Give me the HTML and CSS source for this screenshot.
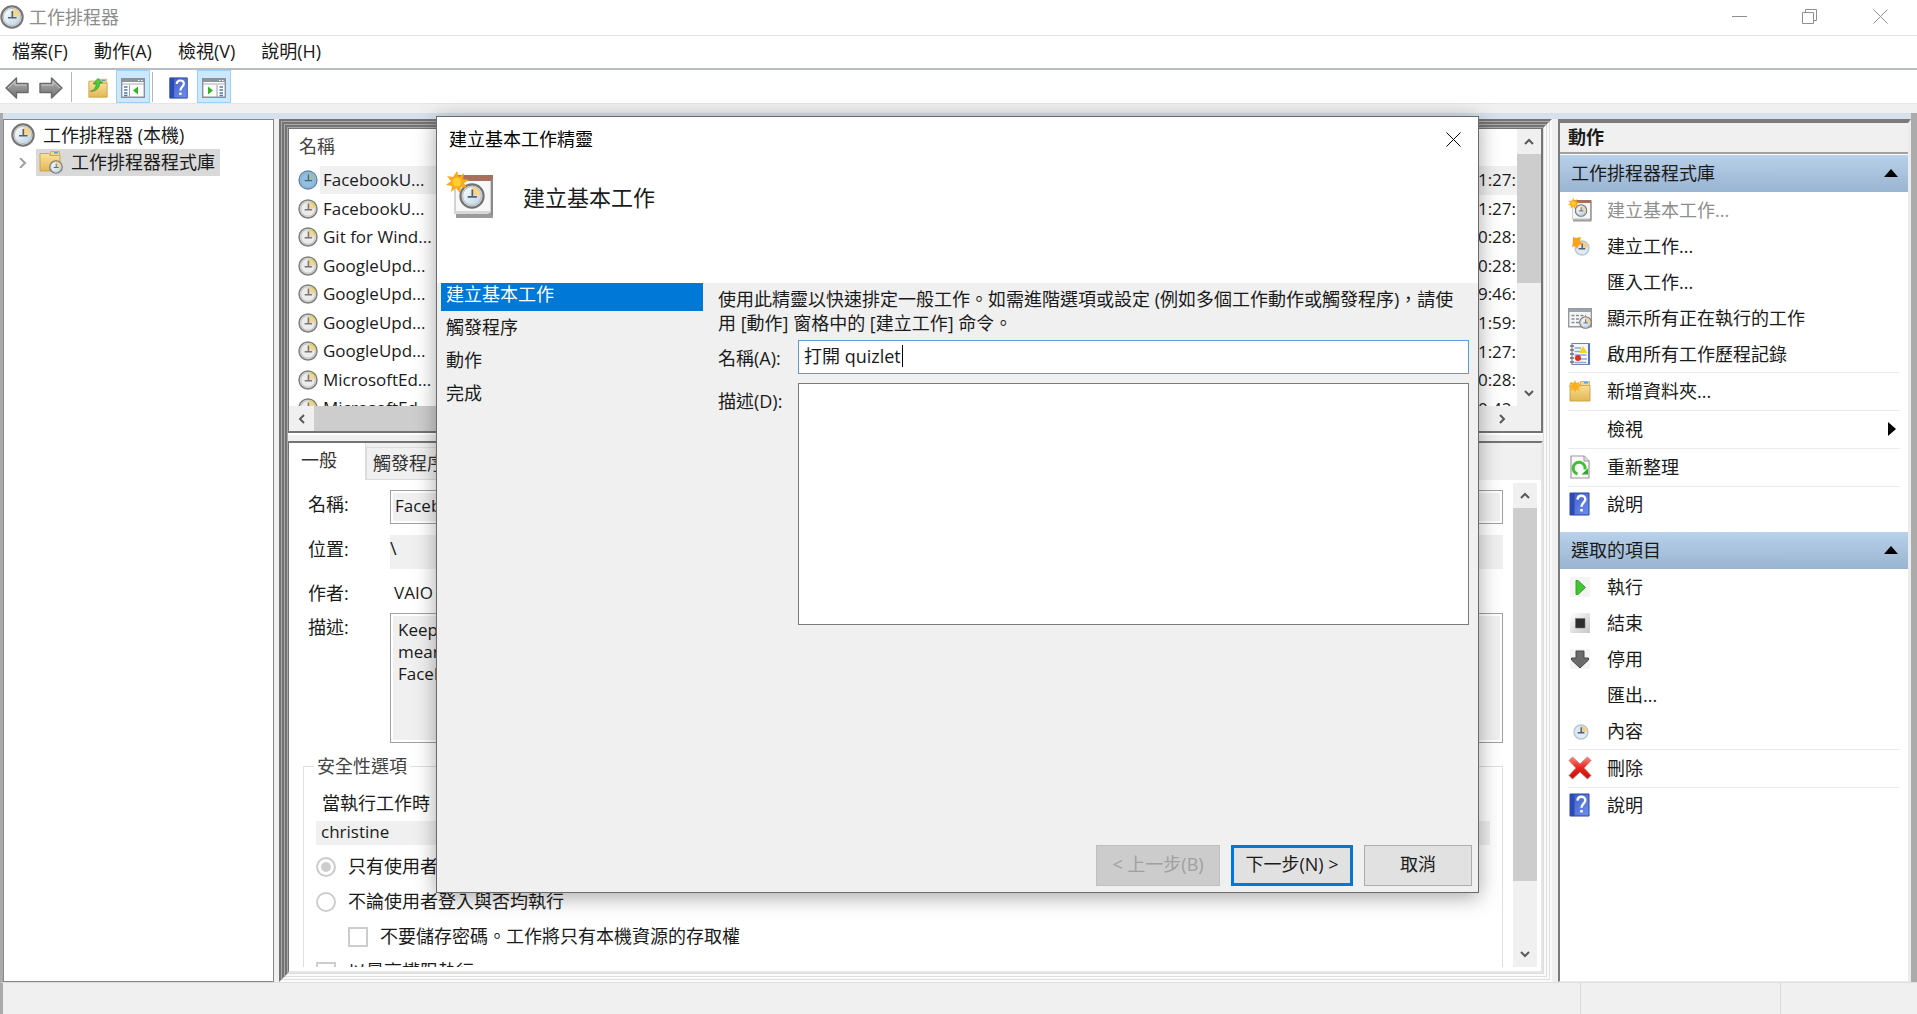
FILE: index.html
```html
<!DOCTYPE html>
<html lang="zh-TW">
<head>
    <meta charset="UTF-8">
    <meta name="viewport" content="width=device-width, initial-scale=1.0">
    <title>工作排程器</title>
    <link rel="stylesheet" href="styles.css">
</head>
<body>

    <!-- 共用圖示 -->
    <svg class="sprite" aria-hidden="true">
        <defs>
            <linearGradient id="g-face" x1="0" y1="0" x2="1" y2="1"><stop offset="0" stop-color="#fff"/><stop offset="1" stop-color="#bcd3e4"/></linearGradient>
            <linearGradient id="g-folder" x1="0" y1="0" x2="0" y2="1"><stop offset="0" stop-color="#fbe3a0"/><stop offset="1" stop-color="#e3b653"/></linearGradient>
            <linearGradient id="g-book" x1="0" y1="0" x2="1" y2="1"><stop offset="0" stop-color="#3c5cc8"/><stop offset="1" stop-color="#6f8fee"/></linearGradient>
            <linearGradient id="g-arrow" x1="0" y1="0" x2="0" y2="1"><stop offset="0" stop-color="#b5b5b5"/><stop offset="1" stop-color="#6f6f6f"/></linearGradient>
            <linearGradient id="g-red" x1="0" y1="0" x2="0" y2="1"><stop offset="0" stop-color="#f58a80"/><stop offset=".5" stop-color="#e8231c"/><stop offset="1" stop-color="#c4120e"/></linearGradient>
            <linearGradient id="g-stop" x1="0" y1="0" x2="1" y2="1"><stop offset="0" stop-color="#fff"/><stop offset="1" stop-color="#c6c6c6"/></linearGradient>
        </defs>
        <symbol id="clock" viewBox="0 0 24 24">
            <circle cx="12" cy="12" r="10.7" fill="#dcdcdc" stroke="#747474" stroke-width="2"/>
            <circle cx="12" cy="12" r="8.6" fill="url(#g-face)" stroke="#a9b4bc" stroke-width=".8"/>
            <path d="M12.5 11.5V3.8a8 8 0 0 1 7.7 7.7z" fill="#f8d48c"/>
            <path d="M12.3 6v6.8M8 12.8h8.5" stroke="#4e6078" stroke-width="1.6" fill="none"/>
        </symbol>
        <symbol id="clock-list" viewBox="0 0 24 24">
            <circle cx="12" cy="12" r="10.8" fill="#e2e2e2" stroke="#808080" stroke-width="1.8"/>
            <circle cx="12" cy="12" r="8.6" fill="#ececea" stroke="#b2b2b2" stroke-width=".8"/>
            <path d="M12.5 11.5V3.8a8 8 0 0 1 7.7 7.7z" fill="#f6d2a0"/>
            <path d="M14 3.2a9 9 0 0 1 6.6 6.8" stroke="#d2d860" stroke-width="1.8" fill="none"/>
            <path d="M12.5 5.5v7.3M8 12.8h9" stroke="#77777b" stroke-width="1.8" fill="none"/>
        </symbol>
        <symbol id="clock-blue" viewBox="0 0 24 24">
            <circle cx="12" cy="12" r="10.8" fill="#9dc3df" stroke="#5d88a8" stroke-width="1.6"/>
            <circle cx="12" cy="12" r="8.6" fill="#94bfe0" stroke="#7ba6c6" stroke-width=".8"/>
            <path d="M12.5 11.5V3.8a8 8 0 0 1 7.7 7.7z" fill="#9fbfa6"/>
            <path d="M12.5 5.5v7.3M8 12.8h9" stroke="#3d6588" stroke-width="1.6" fill="none"/>
        </symbol>
        <symbol id="folder" viewBox="0 0 24 24">
            <path d="M2 4.5h9l1 2h10V22H2z" fill="url(#g-folder)" stroke="#c9a04a" stroke-width=".9"/>
            <path d="M12.5 2.5h9v4h-9z" fill="#f2d98c" stroke="#c9a04a" stroke-width=".7"/>
            <path d="M16 3.8h4" stroke="#4b9bdc" stroke-width="1.4"/>
        </symbol>
        <symbol id="folder-up" viewBox="0 0 24 24">
            <use href="#folder"/>
            <path d="M4 15.5c4-1 6-4 6-8H6.5L12 1.5l5 5h-3.2c0 5-3.8 9.5-9.8 9z" fill="#4fcb3a" stroke="#2b9422" stroke-width=".8"/>
        </symbol>
        <symbol id="folder-clock" viewBox="0 0 24 24">
            <use href="#folder" x="-1" y="-1"/>
            <svg x="10" y="10" width="14" height="14"><use href="#clock"/></svg>
        </symbol>
        <symbol id="folder-new" viewBox="0 0 24 24">
            <use href="#folder"/>
            <path d="M7 1l1.4 3 3.2-1.3-1.3 3.2 3 1.4-3 1.4 1.3 3.2-3.2-1.3L7 13.6 5.6 10.6 2.4 11.9l1.3-3.2-3-1.4 3-1.4L2.4 2.7 5.6 4z" fill="#fcae1b"/>
        </symbol>
        <symbol id="help" viewBox="0 0 24 24">
            <path d="M2 1h19v22H2z" fill="url(#g-book)" stroke="#2a459c"/>
            <path d="M2 1h4.500v22H2z" fill="#2b4bb5"/>
            <path d="M9.500 7.600c.2-5 7.800-5 7.800-.4 0 3.500-3.800 3.300-3.800 7.600" fill="none" stroke="#fff" stroke-width="2.400"/>
            <path d="M12.200 17h2.600v2.600h-2.600z" fill="#fff"/>
        </symbol>
        <symbol id="pane-left" viewBox="0 0 24 20">
            <path d="M.7.700h22.600v18.600H.7z" fill="#fdfdfd" stroke="#8a9097" stroke-width="1.400"/>
            <path d="M1 1h22v3H1z" fill="#8b939b"/><path d="M1 6h22" stroke="#a7aeb5"/>
            <path d="M17 2.500h1.500M20 2.500h1.500" stroke="#fff"/>
            <path d="M8.500 7v12" stroke="#9aa0a6"/>
            <path d="M3 9h3.500M3 12h3.500M3 15h3.500M3 17.500h3.500" stroke="#4c7cb0" stroke-width="1.300"/>
            <path d="M17 8.500v8L12 12.500z" fill="#35b324"/>
        </symbol>
        <symbol id="pane-right" viewBox="0 0 24 20">
            <path d="M.7.700h22.600v18.600H.7z" fill="#fdfdfd" stroke="#8a9097" stroke-width="1.400"/>
            <path d="M1 1h22v3H1z" fill="#8b939b"/><path d="M1 6h22" stroke="#a7aeb5"/>
            <path d="M17 2.500h1.500M20 2.500h1.500" stroke="#fff"/>
            <path d="M15 7v12" stroke="#9aa0a6"/>
            <path d="M17.500 9H21M17.500 12H21M17.500 15H21M17.500 17.500H21" stroke="#4c7cb0" stroke-width="1.300"/>
            <path d="M6 8.500v8l5-4z" fill="#35b324"/>
        </symbol>
        <symbol id="back" viewBox="0 0 24 22">
            <path d="M1 11L11.500 1v5.500H23v9H11.500V21z" fill="url(#g-arrow)" stroke="#6a6a6a" stroke-width="1.400" stroke-linejoin="round"/>
            <path d="M3 11l7-6.500V8h11.500" fill="none" stroke="#d0d0d0" stroke-width=".9"/>
        </symbol>
        <symbol id="forward" viewBox="0 0 24 22">
            <path d="M23 11L12.500 1v5.500H1v9h11.500V21z" fill="url(#g-arrow)" stroke="#6a6a6a" stroke-width="1.400" stroke-linejoin="round"/>
            <path d="M21 11l-7-6.500V8H2.500" fill="none" stroke="#d0d0d0" stroke-width=".9"/>
        </symbol>
        <symbol id="basic-task" viewBox="0 0 48 48">
            <path d="M10 10h37v37H10z" fill="#9b9b9b"/>
            <path d="M9 5h36v37H9z" fill="#f7f7f7" stroke="#a9a9a9"/>
            <path d="M9 4h38v6H9z" fill="#a86f5c"/><path d="M45 8h2v36h-2z" fill="#8b8b8b"/>
            <path d="M10 40l-3 3h35l3-3z" fill="#d8d8d8"/>
            <svg x="13" y="12" width="26" height="26"><use href="#clock"/></svg>
            <path d="M11 0l2 6 5-4-1 6 6 1-5 3 3 5-6-1-1 6-4-5-5 4 1-6-6-1 5-4-4-5 6 1z" fill="#fba81a"/>
            <circle cx="11" cy="11" r="4.500" fill="#ffcd2e"/>
        </symbol>
        <symbol id="new-task" viewBox="0 0 24 24">
            <svg x="6" y="6" width="16" height="16"><use href="#clock-soft"/></svg>
            <path d="M5 3l3 1 5-1-1 4 3 3-4 1-2 4-2-3-3 1 1-5z" fill="#fba21a"/>
        </symbol>
        <symbol id="clock-soft" viewBox="0 0 24 24">
            <circle cx="12" cy="12" r="10.5" fill="#dfeaf2" stroke="#b3c6d3" stroke-width="2"/>
            <path d="M12.500 11.500V3a9 9 0 0 1 8.500 8.500z" fill="#f5cf7c"/>
            <path d="M12.300 5v8.500M7 13h10" stroke="#4e6078" stroke-width="2.200" fill="none"/>
        </symbol>
        <symbol id="small-clock" viewBox="0 0 24 24">
            <svg x="5" y="5" width="16" height="16"><use href="#clock-soft"/></svg>
        </symbol>
        <symbol id="running" viewBox="0 0 24 24">
            <path d="M.7 2.700h22.600v18H.7z" fill="#f6f6f6" stroke="#9299a0" stroke-width="1.400"/>
            <path d="M1 3h22v3H1z" fill="#9aa2aa"/>
            <path d="M3.500 9.500H18M3.500 13H12M3.500 16.500H11" stroke="#868d93" stroke-dasharray="3 1.500" stroke-width="1.300"/>
            <svg x="11" y="10" width="13" height="13"><use href="#clock"/></svg>
        </symbol>
        <symbol id="history" viewBox="0 0 24 24">
            <path d="M4 1.500h17.500v21H4z" fill="#f4f8fd" stroke="#7683a8" stroke-width="1.200"/>
            <path d="M20 2h1.800v20H20z" fill="#5271c4"/>
            <path d="M6.500 6H13M6.500 9.500h6M6.500 13h12M12 17h7M6.500 20.500h12" stroke="#8dabd0" stroke-width="1.300"/>
            <path d="M2 4h4M2 8h4M2 12h4M2 16h4M2 20h4" stroke="#6d6d6d" stroke-width="1.300"/>
            <path d="M15 4l4.500 7h-8.500z" fill="#f7d21e"/><circle cx="10" cy="16" r="3" fill="#d8322a"/>
        </symbol>
        <symbol id="refresh" viewBox="0 0 24 24">
            <path d="M3 1h13l5 5v17H3z" fill="#fafafa" stroke="#9a9a9a" stroke-width="1.200"/>
            <path d="M16 1v5h5" fill="#e2e2e2" stroke="#9a9a9a"/>
            <path d="M9.500 19A6 6 0 1 1 17 14.500" fill="none" stroke="#3fbe36" stroke-width="3"/>
            <path d="M20 13.500v6h-6.500z" fill="#2fa628"/>
        </symbol>
        <symbol id="run" viewBox="0 0 24 24">
            <path d="M2 2h20v20H2z" fill="#f4f4f4"/>
            <path d="M8 5.500l2 0 7.500 7-7.500 7H8z" fill="#43c435" stroke="#2c9a22" stroke-width=".9"/>
        </symbol>
        <symbol id="stop" viewBox="0 0 24 24">
            <path d="M2 2h20v20H2z" fill="url(#g-stop)"/>
            <path d="M7.500 7.500h9.500V17H7.500z" fill="#2e2e2e" stroke="#6c6c6c" stroke-width=".6"/>
        </symbol>
        <symbol id="disable" viewBox="0 0 24 24">
            <path d="M2 2h20v20H2z" fill="#f4f4f4"/>
            <path d="M8 4h8v7h4.500v2L12 21l-8.500-8v-2H8z" fill="#6a6a6a" stroke="#444" stroke-linejoin="round"/>
        </symbol>
        <symbol id="delete" viewBox="0 0 24 24">
            <path d="M4.500 1L12 8l7.500-7L23 4.500 16 12l7 7.500-3.500 3.500L12 16l-7.500 7L1 19.500 8 12 1 4.500z" fill="url(#g-red)" stroke="#d56a64" stroke-width=".8" stroke-linejoin="round"/>
        </symbol>
        <symbol id="chev-up" viewBox="0 0 10 10"><path d="M1 7l4-4 4 4" fill="none" stroke="#5a5a5a" stroke-width="2"/></symbol>
        <symbol id="chev-down" viewBox="0 0 10 10"><path d="M1 3l4 4 4-4" fill="none" stroke="#5a5a5a" stroke-width="2"/></symbol>
        <symbol id="chev-left" viewBox="0 0 10 10"><path d="M7 1L3 5l4 4" fill="none" stroke="#5a5a5a" stroke-width="2"/></symbol>
        <symbol id="chev-right" viewBox="0 0 10 10"><path d="M3 1l4 4-4 4" fill="none" stroke="#5a5a5a" stroke-width="2"/></symbol>
        <symbol id="close" viewBox="0 0 15 15"><path d="M.5.500l14 14M14.500.500l-14 14" fill="none" stroke="currentColor"/></symbol>
    </svg>

    <div class="window">
        <header class="titlebar">
            <svg class="icon"><use href="#clock"/></svg>
            <h1 class="title">工作排程器</h1>
            <div class="controls">
                <button aria-label="最小化"><svg viewBox="0 0 15 15"><path d="M0 7.500h15" stroke="currentColor"/></svg></button>
                <button aria-label="還原"><svg viewBox="0 0 15 15"><path d="M.5 3.500h11v11H.5zM3.500 3.500v-3h11v11h-3" fill="none" stroke="currentColor"/></svg></button>
                <button aria-label="關閉"><svg><use href="#close"/></svg></button>
            </div>
        </header>

        <nav class="menubar">
            <button>檔案(F)</button>
            <button>動作(A)</button>
            <button>檢視(V)</button>
            <button>說明(H)</button>
        </nav>

        <div class="toolbar">
            <button aria-label="上一頁"><svg><use href="#back"/></svg></button>
            <button aria-label="下一頁"><svg><use href="#forward"/></svg></button>
            <span class="divider"></span>
            <button class="spaced" aria-label="上一層"><svg><use href="#folder-up"/></svg></button>
            <button class="on" aria-label="顯示主控台樹狀目錄"><svg><use href="#pane-left"/></svg></button>
            <span class="divider tight"></span>
            <button class="spaced" aria-label="說明"><svg><use href="#help"/></svg></button>
            <button class="on" aria-label="顯示動作窗格"><svg><use href="#pane-right"/></svg></button>
        </div>

        <main class="workspace">
            <aside class="tree">
                <div class="tree-root"><svg class="icon"><use href="#clock"/></svg>工作排程器 (本機)</div>
                <div class="tree-child">
                    <svg class="twisty" viewBox="0 0 10 10"><path d="M3 0l5 5-5 5" fill="none" stroke="#a0a0a0" stroke-width="2"/></svg>
                    <span class="tree-selected"><svg class="icon"><use href="#folder-clock"/></svg>工作排程器程式庫</span>
                </div>
            </aside>

            <section class="center">
                <div class="bevel"><div class="bevel"><div class="bevel">
                    <div class="list-pane">
                        <div class="list-row">
                            <div class="list-view">
                                <table class="tasks">
                                    <thead><tr><th class="name">名稱</th><th></th></tr></thead>
                                    <tbody>
                                        <tr class="selected"><td class="name"><svg class="row-icon"><use href="#clock-blue"/></svg><span>FacebookU...</span></td><td>1:27:</td></tr>
                                        <tr><td class="name"><svg class="row-icon"><use href="#clock-list"/></svg><span>FacebookU...</span></td><td>1:27:</td></tr>
                                        <tr><td class="name"><svg class="row-icon"><use href="#clock-list"/></svg><span>Git for Wind...</span></td><td>0:28:</td></tr>
                                        <tr><td class="name"><svg class="row-icon"><use href="#clock-list"/></svg><span>GoogleUpd...</span></td><td>0:28:</td></tr>
                                        <tr><td class="name"><svg class="row-icon"><use href="#clock-list"/></svg><span>GoogleUpd...</span></td><td>9:46:</td></tr>
                                        <tr><td class="name"><svg class="row-icon"><use href="#clock-list"/></svg><span>GoogleUpd...</span></td><td>1:59:</td></tr>
                                        <tr><td class="name"><svg class="row-icon"><use href="#clock-list"/></svg><span>GoogleUpd...</span></td><td>1:27:</td></tr>
                                        <tr><td class="name"><svg class="row-icon"><use href="#clock-list"/></svg><span>MicrosoftEd...</span></td><td>0:28:</td></tr>
                                        <tr><td class="name"><svg class="row-icon"><use href="#clock-list"/></svg><span>MicrosoftEd...</span></td><td>0:42:</td></tr>
                                    </tbody>
                                </table>
                            </div>
                            <div class="vscroll">
                                <button aria-label="向上捲動"><svg><use href="#chev-up"/></svg></button>
                                <div class="thumb list-thumb"></div>
                                <button aria-label="向下捲動"><svg><use href="#chev-down"/></svg></button>
                            </div>
                        </div>
                        <div class="hscroll">
                            <button aria-label="向左捲動"><svg><use href="#chev-left"/></svg></button>
                            <div class="hthumb"></div>
                            <button aria-label="向右捲動"><svg><use href="#chev-right"/></svg></button>
                        </div>
                    </div>

                    <div class="detail-pane">
                        <div class="tabs">
                            <button class="tab active">一般</button>
                            <button class="tab">觸發程序</button>
                        </div>
                        <div class="tab-body">
                            <form class="general">
                                <div class="field">
                                    <label for="t-name">名稱:</label>
                                    <input id="t-name" class="boxed" value="FacebookUpdateTask" readonly>
                                </div>
                                <div class="field">
                                    <label for="t-path">位置:</label>
                                    <input id="t-path" class="flat" value="\" readonly>
                                </div>
                                <div class="field author">
                                    <label>作者:</label>
                                    <span>VAIO</span>
                                </div>
                                <div class="field tall">
                                    <label for="t-desc">描述:</label>
                                    <textarea id="t-desc" class="boxed" readonly>Keep
mean
Facebook</textarea>
                                </div>
                                <fieldset class="security">
                                    <legend>安全性選項</legend>
                                    <p>當執行工作時</p>
                                    <div class="account">christine</div>
                                    <label class="choice"><input type="radio" name="logon" checked disabled>只有使用者登入時才執行</label>
                                    <label class="choice"><input type="radio" name="logon" disabled>不論使用者登入與否均執行</label>
                                    <label class="choice sub"><input type="checkbox" disabled>不要儲存密碼。工作將只有本機資源的存取權</label>
                                    <label class="choice"><input type="checkbox" disabled>以最高權限執行</label>
                                </fieldset>
                            </form>
                            <div class="vscroll">
                                <button aria-label="向上捲動"><svg><use href="#chev-up"/></svg></button>
                                <div class="thumb detail-thumb"></div>
                                <button aria-label="向下捲動"><svg><use href="#chev-down"/></svg></button>
                            </div>
                        </div>
                    </div>
                </div></div></div>
            </section>

            <aside class="actions">
                <h2>動作</h2>
                <section class="group">
                    <button class="group-title">工作排程器程式庫<span class="tri-up"></span></button>
                    <button class="action" disabled><svg><use href="#basic-task"/></svg>建立基本工作...</button>
                    <button class="action"><svg><use href="#new-task"/></svg>建立工作...</button>
                    <button class="action"><svg></svg>匯入工作...</button>
                    <button class="action"><svg><use href="#running"/></svg>顯示所有正在執行的工作</button>
                    <button class="action"><svg><use href="#history"/></svg>啟用所有工作歷程記錄</button>
                    <hr>
                    <button class="action"><svg><use href="#folder-new"/></svg>新增資料夾...</button>
                    <hr>
                    <button class="action"><svg></svg>檢視<span class="tri-right"></span></button>
                    <hr>
                    <button class="action"><svg><use href="#refresh"/></svg>重新整理</button>
                    <hr>
                    <button class="action"><svg><use href="#help"/></svg>說明</button>
                </section>
                <section class="group">
                    <button class="group-title">選取的項目<span class="tri-up"></span></button>
                    <button class="action"><svg><use href="#run"/></svg>執行</button>
                    <button class="action"><svg><use href="#stop"/></svg>結束</button>
                    <button class="action"><svg><use href="#disable"/></svg>停用</button>
                    <button class="action"><svg></svg>匯出...</button>
                    <button class="action"><svg><use href="#small-clock"/></svg>內容</button>
                    <hr>
                    <button class="action"><svg><use href="#delete"/></svg>刪除</button>
                    <hr>
                    <button class="action"><svg><use href="#help"/></svg>說明</button>
                </section>
            </aside>
        </main>

        <footer class="statusbar"><span class="grow"></span><span class="cell wide"></span><span class="cell"></span></footer>
    </div>

    <!-- 建立基本工作精靈 -->
    <div class="wizard" role="dialog" aria-labelledby="wizard-title">
        <div class="wizard-head">
            <div class="wizard-bar">
                <span id="wizard-title">建立基本工作精靈</span>
                <button aria-label="關閉"><svg><use href="#close"/></svg></button>
            </div>
            <div class="wizard-banner">
                <svg><use href="#basic-task"/></svg>
                <h2>建立基本工作</h2>
            </div>
        </div>
        <div class="wizard-body">
            <ol class="steps">
                <li class="current">建立基本工作</li>
                <li>觸發程序</li>
                <li>動作</li>
                <li>完成</li>
            </ol>
            <form class="page">
                <p>使用此精靈以快速排定一般工作。如需進階選項或設定 (例如多個工作動作或觸發程序)，請使用 [動作] 窗格中的 [建立工作] 命令。</p>
                <div class="row">
                    <label for="w-name">名稱(A):</label>
                    <div class="name-box">
                        <input id="w-name" value="打開 quizlet">
                        <span class="caret"></span>
                    </div>
                </div>
                <div class="row">
                    <label for="w-desc">描述(D):</label>
                    <textarea id="w-desc"></textarea>
                </div>
            </form>
        </div>
        <div class="wizard-buttons">
            <button class="prev" disabled>&lt; 上一步(B)</button>
            <button class="next">下一步(N) &gt;</button>
            <button class="cancel">取消</button>
        </div>
    </div>

</body>
</html>
```
FILE: styles.css
```css
* { box-sizing: border-box; }

body {
    margin: 0;
    font: 18px/24px 'Open Sans', 'Noto Sans CJK TC', sans-serif;
    color: #1a1a1a;
    background: #f0f0f0;
    overflow: hidden;
}

button, input, textarea {
    font: inherit;
    color: inherit;
    border: 0;
    margin: 0;
    padding: 0;
    background: none;
}

h1, h2, p, ol { margin: 0; padding: 0; font-weight: normal; }
svg { display: block; flex: none; }
.sprite { position: absolute; width: 0; height: 0; }
.icon { width: 24px; height: 24px; }

.window {
    display: flex;
    flex-direction: column;
    height: 100vh;
}

/* 標題列、功能表、工具列 */
.titlebar {
    display: flex;
    align-items: center;
    height: 36px;
    padding-bottom: 2px;
    background: #fff;
    border-bottom: 1px solid #e3e3e3;
}
.title { margin-left: 5px; font-size: 18px; line-height: 24px; color: #8c8c8c; }
.controls { display: flex; margin-left: auto; color: #8f8f8f; }
.controls button { width: 70px; height: 33px; }
.controls svg { width: 15px; height: 15px; margin: auto; }
.controls button:last-child { width: 73px; }

.menubar {
    display: flex;
    height: 34px;
    padding-right: 12px;
    background: #fff;
    border-bottom: 2px solid #b9bcc0;
}
.menubar button { padding: 0 14px 2px 12px; }

.toolbar {
    display: flex;
    align-items: center;
    height: 34px;
    background: #fff;
    border-bottom: 1px solid #e6e6e6;
}
.toolbar button { width: 34px; height: 33px; padding-top: 2px; }
.toolbar svg { width: 24px; height: 22px; margin: auto; }
.toolbar .spaced { margin-left: 9px; }
.toolbar .on { background: #cce8ff; border: 1px solid #99d1ff; margin-left: 1px; }
.divider { width: 1px; height: 30px; background: #b5b5b5; margin-left: 3px; }
.divider.tight { margin-left: 2px; }

/* 主要區域 */
.workspace {
    display: flex;
    flex: 1;
    min-height: 0;
    margin-top: 9px;
    border: solid #ababab;
    border-width: 0 6px 0 3px;
    box-shadow: inset 0 6px #d5e2ee;
    padding-top: 6px;
}

.tree {
    width: 271px;
    background: #fff;
    border: 1px solid #828790;
    padding: 3px 0 0 7px;
}
.tree-root { display: flex; gap: 8px; height: 26px; }
.tree-child { display: flex; align-items: center; }
.twisty { width: 10px; height: 10px; margin: 0 9px 0 6px; }
.tree-selected {
    display: flex;
    gap: 8px;
    padding: 1px 5px 2px 3px;
    background: #d9d9d9;
}

.center { flex: 1; min-width: 0; margin: 0 6px 0 5px; }
.bevel {
    display: flex;
    flex-direction: column;
    height: 100%;
    padding: 1px;
    border: 2px solid;
    border-color: #747474 #fbfbfb #fbfbfb #747474;
    box-shadow: inset 1px 1px #a8a8a8, inset -1px -1px #dedede;
    background: #f0f0f0;
}

.list-pane {
    height: 305px;
    border: 2px solid #747474;
    border-width: 1px 2px 2px 1px;
    background: #fff;
    box-shadow: 0 2px #fff;
}
.list-row { display: flex; height: 277px; }
.list-view { flex: 1; overflow: hidden; }
.tasks {
    width: 100%;
    height: 294px;
    border-collapse: collapse;
    font-size: 17px;
}
.tasks th {
    height: 37px;
    padding: 0 0 4px 10px;
    font-size: 18px;
    font-weight: normal;
    text-align: left;
    color: #444;
}
.tasks td { padding: 0 1px 0 0; text-align: right; }
.tasks td.name { display: flex; padding-left: 9px; height: 28px; align-items: center; }
.row-icon { width: 20px; height: 20px; margin-right: 2px; }
.name span { flex: 1; padding-left: 3px; text-align: left; line-height: 28px; }
.selected td:last-child, .selected .name span { background: #f0f0f0; }

.vscroll {
    display: flex;
    flex-direction: column;
    width: 24px;
    background: #f0f0f0;
}
.vscroll button, .hscroll button { width: 24px; height: 25px; }
.vscroll svg, .hscroll svg { width: 10px; height: 10px; margin: auto; }
.vscroll button:last-child { margin-top: auto; padding-bottom: 2px; }
.thumb { background: #cdcdcd; }
.list-thumb { height: 129px; }
.detail-thumb { flex: 0 0 77%; }
.hscroll {
    display: flex;
    padding: 0 27px 0 1px;
    background: #f0f0f0;
}
.hthumb { width: 88%; margin-right: auto; background: #cdcdcd; }

/* 詳細資料 */
.detail-pane {
    display: flex;
    flex-direction: column;
    flex: 1;
    min-height: 0;
    margin-top: 8px;
    border: 2px solid;
    border-color: #747474 #e5e5e5 #e5e5e5 #747474;
    border-left-width: 1px;
    background: #fff;
}
.tabs {
    display: flex;
    align-items: flex-end;
    height: 37px;
    background: #f0f0f0;
}
.tab {
    height: 33px;
    padding: 0 6px 2px;
    border: 1px solid #dcdcdc;
    text-align: left;
    color: #333;
}
.tab.active {
    width: 77px;
    height: 37px;
    padding: 0 0 3px 12px;
    border-width: 0 1px 0 0;
    background: #fff;
}
.tab-body {
    display: flex;
    flex: 1;
    min-height: 0;
    padding: 3px 4px 4px 14px;
}
.general {
    flex: 1;
    min-width: 0;
    overflow: hidden;
    margin-right: 10px;
    padding-top: 7px;
}
.field { display: flex; height: 34px; margin-bottom: 11px; }
.field label { width: 87px; padding: 2px 0 0 5px; }
.field input, .field textarea { flex: 1; resize: none; }
.field .boxed {
    padding: 0 3px 2px 4px;
    border: 1px solid #a0a0a0;
    box-shadow: inset 0 0 0 2px #fff;
    background: #f0f0f0;
    font-size: 17px;
    outline: 0;
}
.field .flat { background: #f0f0f0; padding-bottom: 8px; }
.author { height: 22px; font-size: 17px; line-height: 22px; }
.author label { font-size: 18px; }
.author span { padding: 2px 4px; }
.tall { height: 130px; }
.field textarea.boxed { padding: 5px 7px; line-height: 22px; }

.security {
    min-width: 0;
    margin: 0;
    padding: 14px 12px 40px;
    border: 1px solid #dfdfdf;
}
.security legend { padding: 0 3px; margin-left: -2px; color: #444; }
.security p { padding-left: 6px; margin-top: -1px; }
.account {
    height: 24px;
    margin: 6px 0 9px;
    padding-left: 5px;
    background: #f0f0f0;
    font-size: 17px;
    line-height: 22px;
}
.choice { display: flex; gap: 12px; margin-bottom: 11px; }
.choice.sub { margin-left: 32px; }
.choice input {
    appearance: none;
    flex: none;
    width: 20px;
    height: 20px;
    margin-top: 3px;
    border: 2px solid #cdcdcd;
    background: #fff;
}
.choice input[type=radio] { border-radius: 50%; }
.choice input:checked { background: #cdcdcd; box-shadow: inset 0 0 0 3px #fff; }

/* 動作窗格 */
.actions {
    width: 353px;
    border: solid;
    border-width: 4px 3px 1px 2px;
    border-color: #7b7b7b #ececec #ececec #7b7b7b;
    background: #fff;
}
.actions h2 {
    height: 31px;
    padding: 2px 8px;
    border-bottom: 2px solid #a0a0a0;
    background: #f0f0f0;
    font-size: 18px;
    font-weight: bold;
    line-height: 24px;
}
.group { margin-bottom: 8px; }
.group-title {
    display: flex;
    align-items: center;
    justify-content: space-between;
    width: 100%;
    height: 38px;
    padding: 0 10px 2px 11px;
    border-top: 1px solid #fff;
    background: linear-gradient(#b9d1ea, #99b4d1);
}
.tri-up { border: 7px solid transparent; border-top: 0; border-bottom: 8px solid #000; }
.action {
    display: flex;
    align-items: center;
    gap: 15px;
    width: 100%;
    height: 36px;
    padding: 0 12px 1px 8px;
}
.action svg { width: 24px; height: 24px; }
.action:disabled { color: #8e8e8e; }
.tri-right { margin-left: auto; border: 7px solid transparent; border-left: 8px solid #000; border-right: 0; }
.group hr { height: 1px; margin: 0 8px; border: 0; background: #ebebeb; }
.group hr + .action { height: 37px; padding-bottom: 2px; }
.group hr + .action:last-child { height: 36px; }

.statusbar {
    display: flex;
    height: 32px;
    border-top: 1px solid #dedede;
    border-left: 3px solid #ababab;
    background: #f0f0f0;
}
.grow { flex: 1; }
.cell { width: 137px; border-left: 1px solid #d8d8d8; }
.cell.wide { width: 200px; }

/* 精靈視窗 */
.wizard {
    position: absolute;
    left: 436px;
    top: 116px;
    display: flex;
    flex-direction: column;
    width: 1043px;
    height: 777px;
    border: 1px solid #6b6b6b;
    background: #f0f0f0;
    box-shadow: 0 4px 20px rgba(0, 0, 0, 0.35);
}
.wizard-head { height: 166px; background: #fff; }
.wizard-bar {
    display: flex;
    align-items: center;
    justify-content: space-between;
    height: 44px;
    padding: 0 17px 0 12px;
    color: #000;
}
.wizard-bar svg { width: 15px; height: 15px; }
.wizard-banner { display: flex; gap: 29px; padding: 10px 9px; }
.wizard-banner svg { width: 48px; height: 48px; }
.wizard-banner h2 { font-size: 22px; line-height: 52px; }
.wizard-body { display: flex; flex: 1; gap: 15px; padding: 0 9px 0 4px; }
.steps { width: 262px; list-style: none; line-height: 22px; }
.steps li { height: 28px; margin-bottom: 5px; padding-left: 5px; }
.steps .current { background: #0078d7; color: #fff; }
.page { flex: 1; padding-top: 4px; }
.row { display: flex; margin-top: 9px; }
.page p + .row { margin-top: 5px; }
.row label { width: 80px; padding-top: 6px; }
.name-box { position: relative; flex: 1; }
.name-box input {
    width: 100%;
    height: 34px;
    padding: 0 5px 4px;
    border: 1px solid #569de5;
    background: #fff;
    font-size: 18px;
    outline: 0;
}
.caret { position: absolute; left: 104px; top: 5px; width: 1px; height: 22px; background: #000; }
.row textarea {
    flex: 1;
    height: 242px;
    border: 1px solid #7a7a7a;
    background: #fff;
    resize: none;
}
.wizard-buttons {
    display: flex;
    justify-content: flex-end;
    gap: 11px;
    padding: 0 6px 6px;
}
.wizard-buttons button {
    height: 41px;
    padding-bottom: 3px;
    border: 1px solid #adadad;
    background: #e1e1e1;
}
.wizard-buttons .prev { width: 124px; background: #ccc; border-color: #bfbfbf; color: #a0a0a0; }
.wizard-buttons .next { width: 122px; border: 3px solid #0078d7; }
.wizard-buttons .cancel { width: 108px; }
```
